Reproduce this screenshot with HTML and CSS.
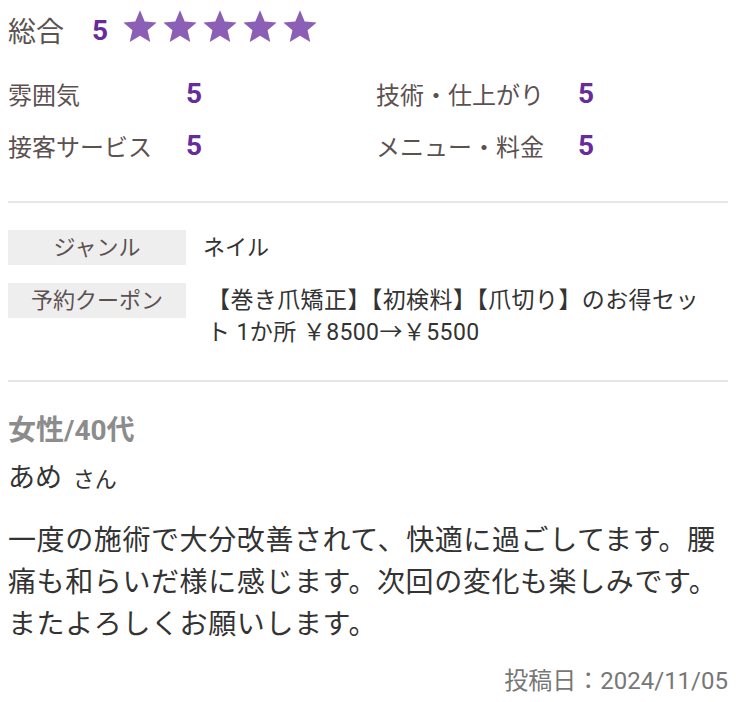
FILE: index.html
```html
<!DOCTYPE html>
<html>
<head>
<title>口コミ</title>
<link rel="stylesheet" href="styles.css">
</head>
<body>

<div class="review">
    <div class="total">
        <span class="total-label">総合</span>
        <span class="total-score">5</span>
        <span class="stars">
            <svg viewBox="0 0 24 24"><path d="M12 17.27L18.18 21l-1.64-7.03L22 9.24l-7.19-.61L12 2 9.19 8.63 2 9.24l5.46 4.73L5.82 21z"/></svg>
            <svg viewBox="0 0 24 24"><path d="M12 17.27L18.18 21l-1.64-7.03L22 9.24l-7.19-.61L12 2 9.19 8.63 2 9.24l5.46 4.73L5.82 21z"/></svg>
            <svg viewBox="0 0 24 24"><path d="M12 17.27L18.18 21l-1.64-7.03L22 9.24l-7.19-.61L12 2 9.19 8.63 2 9.24l5.46 4.73L5.82 21z"/></svg>
            <svg viewBox="0 0 24 24"><path d="M12 17.27L18.18 21l-1.64-7.03L22 9.24l-7.19-.61L12 2 9.19 8.63 2 9.24l5.46 4.73L5.82 21z"/></svg>
            <svg viewBox="0 0 24 24"><path d="M12 17.27L18.18 21l-1.64-7.03L22 9.24l-7.19-.61L12 2 9.19 8.63 2 9.24l5.46 4.73L5.82 21z"/></svg>
        </span>
    </div>

    <div class="scores">
        <div class="score-group">
            <span class="score-label">雰囲気</span><span class="score">5</span>
            <span class="score-label">接客サービス</span><span class="score">5</span>
        </div>
        <div class="score-group">
            <span class="score-label">技術・仕上がり</span><span class="score">5</span>
            <span class="score-label">メニュー・料金</span><span class="score">5</span>
        </div>
    </div>

    <dl class="info">
        <div class="info-row">
            <dt>ジャンル</dt>
            <dd>ネイル</dd>
        </div>
        <div class="info-row">
            <dt>予約クーポン</dt>
            <dd class="coupon">【巻き爪矯正】【初検料】【爪切り】のお得セット 1か所 ￥8500→￥5500</dd>
        </div>
    </dl>

    <p class="attr">女性/40代</p>
    <p class="name">あめ <span>さん</span></p>

    <p class="comment">一度の施術で大分改善されて、快適に過ごしてます。腰痛も和らいだ様に感じます。次回の変化も楽しみです。またよろしくお願いします。</p>

    <p class="date">投稿日：2024/11/05</p>
</div>

</body>
</html>
```

FILE: styles.css
```css
/* Review card */
body {
    margin: 0;
    font-family: Roboto, "Noto Sans CJK JP", sans-serif;
    background: #fff;
}

.review {
    padding: 0 8px;
}

.total {
    display: flex;
    align-items: center;
    height: 60px;
}

.total-label {
    font-size: 28px;
    color: #5c5151;
    margin-right: 28px;
}

.total-score {
    font-size: 28px;
    font-weight: 700;
    color: #672c9c;
    margin-right: 12px;
}

.stars {
    display: flex;
    margin-top: -6px;
}

.stars svg {
    width: 40px;
    height: 40px;
    fill: #8b5fb6;
}

.scores {
    display: grid;
    grid-template-columns: 1fr 1fr;
    column-gap: 16px;
    padding: 7px 0 30px;
    border-bottom: 2px solid #e6e6e6;
}

.score-group {
    display: grid;
    grid-template-columns: auto 1fr;
    grid-auto-rows: 52px;
    column-gap: 34px;
    align-items: center;
}

.score-label {
    font-size: 24px;
    color: #5c5151;
}

.score {
    font-size: 28px;
    font-weight: 700;
    color: #672c9c;
}

.info {
    margin: 27px 0 0;
    padding-bottom: 31px;
    border-bottom: 2px solid #e6e6e6;
}

.info-row {
    display: flex;
    align-items: flex-start;
    margin-bottom: 18px;
}

.info-row:last-child {
    margin-bottom: 0;
}

.info dt {
    flex: 0 0 178px;
    height: 35px;
    line-height: 35px;
    background: #eeeeee;
    text-align: center;
    font-size: 22px;
    color: #5c5151;
}

.info dd {
    margin: 0;
    padding-left: 17px;
    font-size: 22px;
    line-height: 35px;
    color: #333;
}

.info dd.coupon {
    padding: 2px 24px 0 21px;
    font-size: 23px;
    line-height: 32px;
    letter-spacing: 0.4px;
}

.attr {
    margin: 31px 0 0;
    font-size: 28px;
    font-weight: 700;
    line-height: 36px;
    color: #8c8c8c;
}

.name {
    margin: 11px 0 0;
    font-size: 27px;
    line-height: 36px;
    color: #333;
}

.name span {
    margin-left: 4px;
    font-size: 22px;
}

.comment {
    margin: 22px 0 0;
    font-size: 28px;
    line-height: 42px;
    letter-spacing: 0.6px;
    color: #333;
}

.date {
    margin: 19px 0 0;
    font-size: 24px;
    line-height: 32px;
    text-align: right;
    color: #777;
}
```
